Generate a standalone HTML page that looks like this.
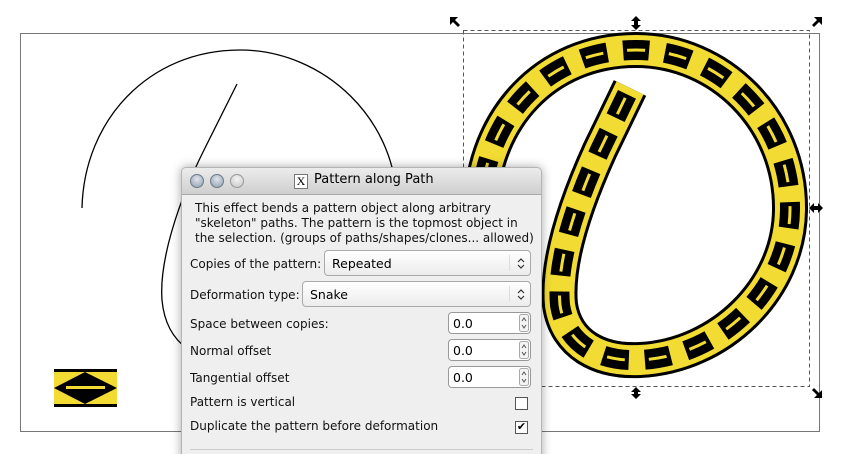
<!DOCTYPE html>
<html style="overflow:hidden"><head><style>
html,body{margin:0;width:845px;height:454px;overflow:hidden}
body{background:#fff;font-family:"Liberation Sans","DejaVu Sans",sans-serif;position:relative}
.abs{position:absolute}
#dlg{left:181px;top:167px;width:359px;height:300px;background:#efefef;border:1px solid #b5b5b5;border-radius:5px 5px 0 0;box-shadow:0 0 10px rgba(0,0,0,.35)}
#tb{height:26px;background:linear-gradient(#ececec,#cfcfcf);border-bottom:1px solid #a8a8a8;border-radius:5px 5px 0 0;position:relative}
.btn{position:absolute;top:6px;width:12px;height:12px;border-radius:50%;background:radial-gradient(circle at 50% 35%,#dfe6ee,#8b9bab);border:1px solid #6d7b88}
.t{font-size:12px;color:#111;position:absolute;left:8px;font-family:"DejaVu Sans",sans-serif;white-space:nowrap}
.combo{position:absolute;right:10px;height:26px;border:1px solid #a9a9a9;border-radius:4px;background:linear-gradient(#fff,#ececec);font-size:12.5px;font-family:"DejaVu Sans",sans-serif;line-height:25px;padding-left:7px;box-sizing:border-box}
.combo:after{content:"";position:absolute;right:20px;top:4px;height:16px;border-left:1px solid #ddd}
.combo svg{position:absolute;right:5px;top:7px}
.spin{position:absolute;left:266px;width:83px;height:22px;border:1px solid #999;border-radius:4px;background:#fff;font-size:12.5px;font-family:"DejaVu Sans",sans-serif;line-height:21px;padding-left:4px;box-sizing:border-box}
.spin svg{position:absolute;right:1px;top:1px}
.cb{position:absolute;left:333px;width:11px;height:11px;border:1px solid #555;background:#fff;font-size:11px;line-height:11px;text-align:center}
</style></head><body>
<svg class="abs" style="left:0;top:0" width="845" height="454">
<rect x="20.5" y="33.5" width="799" height="398" fill="none" stroke="#777"/>
<path transform="translate(-396,0)" d="M633,84 L600,150 C575,200 555,260 558,300 C562,345 595,365 640,362 C720,358 790,290 793,210 C795,120 720,50 636,50 C545,50 480,120 478,208" fill="none" stroke="#000" stroke-width="1.3"/>
<g fill="none">
<path d="M630,88 L600,150 C575,205 556,262 560,305 C566,345 600,362 640,360 C720,356 789,290 790,210 C791,120 720,50 636,50 C545,50 483,120 481,208" stroke="#000" stroke-width="36"/>
<path d="M630,88 L600,150 C575,205 556,262 560,305 C566,345 600,362 640,360 C720,356 789,290 790,210 C791,120 720,50 636,50 C545,50 483,120 481,208" stroke="#f2dc33" stroke-width="30"/>
<path d="M630,88 L600,150 C575,205 556,262 560,305 C566,345 600,362 640,360 C720,356 789,290 790,210 C791,120 720,50 636,50 C545,50 483,120 481,208" stroke="#000" stroke-width="20" stroke-dasharray="26 16" stroke-dashoffset="-7"/>
<path d="M630,88 L600,150 C575,205 556,262 560,305 C566,345 600,362 640,360 C720,356 789,290 790,210 C791,120 720,50 636,50 C545,50 483,120 481,208" stroke="#f2dc33" stroke-width="3" stroke-dasharray="18 24" stroke-dashoffset="-11"/>
</g>
<rect x="463.5" y="30.5" width="346" height="356" fill="none" stroke="#555" stroke-dasharray="4 3"/>
<g fill="#000">
<path d="M450,17 l8,0 -3,3 5,5 -2,2 -5,-5 -3,3z"/>
<path d="M822,17 l-8,0 3,3 -5,5 2,2 5,-5 3,3z"/>
<path d="M822,398 l-8,0 3,-3 -5,-5 2,-2 5,5 3,-3z"/>
<path d="M636,16 l5,5 -3,0 0,4 3,0 -5,5 -5,-5 3,0 0,-4 -3,0z"/>
<path d="M636,387 l5,5 -3,0 0,2 3,0 -5,5 -5,-5 3,0 0,-2 -3,0z"/>
<path d="M809,208 l5,-5 0,3 4,0 0,-3 5,5 -5,5 0,-3 -4,0 0,3z"/>
</g>
<rect x="54" y="369" width="63" height="38" fill="#f2dc33"/>
<rect x="54" y="369" width="63" height="3" fill="#000"/>
<rect x="54" y="404" width="63" height="3" fill="#000"/>
<path d="M54,388 L85,372 L117,388 L85,404z" fill="#000"/>
<rect x="66" y="386" width="39" height="3" fill="#f2dc33"/>
</svg>
<div id="dlg" class="abs">
<div id="tb">
<div class="btn" style="left:8px"></div><div class="btn" style="left:28px"></div><div class="btn" style="left:48px;background:radial-gradient(circle at 50% 35%,#f4f4f4,#c4c4c4);border-color:#999"></div>
<div style="position:absolute;left:112px;top:6px;width:12px;height:13px;border:1px solid #777;background:#fff;font-size:12px;line-height:13px;text-align:center;font-family:'Liberation Serif',serif">X</div>
<div style="position:absolute;left:132px;top:4px;font-size:13px;font-family:'DejaVu Sans',sans-serif">Pattern along Path</div>
</div>
<div class="t" style="left:13px;top:33px;line-height:15px;font-size:12px">This effect bends a pattern object along arbitrary<br>"skeleton" paths. The pattern is the topmost object in<br>the selection. (groups of paths/shapes/clones... allowed)</div>
<div class="t" style="top:89px">Copies of the pattern:</div>
<div class="combo" style="left:142px;top:82px">Repeated<svg width="8" height="11"><path d="M1,4 L4,1 L7,4 M1,7 L4,10 L7,7" fill="none" stroke="#333" stroke-width="1.2"/></svg></div>
<div class="t" style="top:120px">Deformation type:</div>
<div class="combo" style="left:120px;top:113px">Snake<svg width="8" height="11"><path d="M1,4 L4,1 L7,4 M1,7 L4,10 L7,7" fill="none" stroke="#333" stroke-width="1.2"/></svg></div>
<div class="t" style="top:149px">Space between copies:</div><div class="spin" style="top:144px">0.0<svg width="10" height="18"><rect x="0.5" y="0.5" width="9" height="17" rx="2" fill="#f4f4f4" stroke="#aaa"/><path d="M3,7 L5,4 L7,7 M3,11 L5,14 L7,11" fill="none" stroke="#555"/></svg></div>
<div class="t" style="top:176px">Normal offset</div><div class="spin" style="top:171px">0.0<svg width="10" height="18"><rect x="0.5" y="0.5" width="9" height="17" rx="2" fill="#f4f4f4" stroke="#aaa"/><path d="M3,7 L5,4 L7,7 M3,11 L5,14 L7,11" fill="none" stroke="#555"/></svg></div>
<div class="t" style="top:203px">Tangential offset</div><div class="spin" style="top:198px">0.0<svg width="10" height="18"><rect x="0.5" y="0.5" width="9" height="17" rx="2" fill="#f4f4f4" stroke="#aaa"/><path d="M3,7 L5,4 L7,7 M3,11 L5,14 L7,11" fill="none" stroke="#555"/></svg></div>
<div class="t" style="top:227px">Pattern is vertical</div><div class="cb" style="top:229px"></div>
<div class="t" style="top:251px">Duplicate the pattern before deformation</div><div class="cb" style="top:253px">✔</div>
<div style="position:absolute;left:8px;right:8px;top:281px;border-top:1px solid #ccc"></div>
</div>
</body></html>
